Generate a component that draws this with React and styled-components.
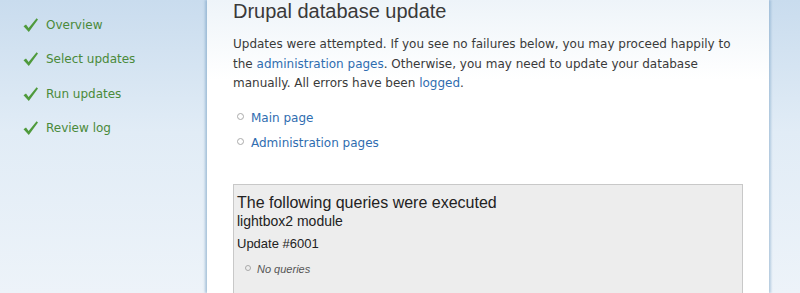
import React from "react";
import styled, { createGlobalStyle } from "styled-components";

const Global = createGlobalStyle`
  html, body { margin: 0; padding: 0; }
  body {
    width: 800px;
    height: 293px;
    overflow: hidden;
    background: linear-gradient(180deg, #c9dcee 0%, #e1ecf6 45%, #edf3f9 100%);
    font-family: "DejaVu Sans", Verdana, sans-serif;
  }
`;

const Page = styled.div`
  display: flex;
  height: 293px;
`;

const Sidebar = styled.ul`
  list-style: none;
  margin: 0;
  padding: 14px 0 0 22px;
  width: 185px;
  box-sizing: content-box;
  display: flex;
  flex-direction: column;
  gap: 13.5px;
`;

const Task = styled.li`
  display: flex;
  align-items: center;
  gap: 7px;
  height: 21px;
  font-size: 12px;
  color: #4a8a3a;
`;

const Panel = styled.main`
  width: 562px;
  height: 293px;
  display: flex;
  flex-direction: column;
  background: linear-gradient(180deg, #eef4f9 0px, #ffffff 80px);
  box-shadow: -2px 0 2px rgba(120, 160, 195, 0.55), 2px 0 2px rgba(120, 160, 195, 0.45);
  padding: 0 26px;
  box-sizing: border-box;
`;

const Title = styled.h1`
  margin: 0;
  font-family: "Liberation Sans", Arial, sans-serif;
  font-weight: normal;
  font-size: 20px;
  line-height: 22px;
  color: #3a3a3a;
`;

const Text = styled.p`
  margin: 13px 0 0;
  font-size: 12px;
  line-height: 19.5px;
  color: #3a3a3a;
`;

const Link = styled.a`
  color: #2f6db0;
  text-decoration: none;
`;

const Links = styled.ul`
  list-style: none;
  margin: 15px 0 0;
  padding: 0 0 0 4px;
  display: flex;
  flex-direction: column;
  gap: 6px;
`;

const Bullet = styled.span`
  width: ${p => p.$size}px;
  height: ${p => p.$size}px;
  border: 1px solid #aaa;
  border-radius: 50%;
  box-sizing: border-box;
  flex: none;
  margin-top: ${p => p.$offset}px;
`;

const LinkItem = styled.li`
  display: flex;
  align-items: flex-start;
  gap: 7px;
  font-size: 12px;
  line-height: 19px;
`;

const Box = styled.section`
  flex: 1;
  margin-top: 31px;
  border: 1px solid #c8c8c8;
  border-bottom: none;
  background: #ededed;
  padding: 9px 3px 0;
  box-sizing: border-box;
  font-family: "Liberation Sans", Arial, sans-serif;
  color: #222;
  overflow: hidden;
`;

const BoxTitle = styled.h2`
  margin: 0;
  font-weight: normal;
  font-size: 16px;
  line-height: 18px;
`;

const Module = styled.h3`
  margin: 0;
  font-weight: normal;
  font-size: 14px;
  line-height: 18px;
`;

const Update = styled.h4`
  margin: 5px 0 0;
  font-weight: normal;
  font-size: 13px;
  line-height: 18px;
`;

const Queries = styled.ul`
  list-style: none;
  margin: 9px 0 0;
  padding: 0 0 0 8px;
`;

const QueryItem = styled.li`
  display: flex;
  align-items: flex-start;
  gap: 6px;
  font-size: 11px;
  font-style: italic;
  line-height: 14px;
  color: #555;
`;

const Check = () => (
  <svg width="17" height="16" viewBox="0 0 17 16">
    <path d="M1.5 9.2 L4 7.4 L6.6 11 L14.6 1.2 L16 2.6 L6.8 15 Z" fill="#4f9a3c" />
  </svg>
);

const tasks = ["Overview", "Select updates", "Run updates", "Review log"];

export default function App() {
  return (
    <>
      <Global />
      <Page>
        <Sidebar>
          {tasks.map(t => (
            <Task key={t}>
              <Check />
              {t}
            </Task>
          ))}
        </Sidebar>
        <Panel>
          <Title>Drupal database update</Title>
          <Text>
            Updates were attempted. If you see no failures below, you may proceed happily to the{" "}
            <Link href="#">administration pages</Link>. Otherwise, you may need to update your database
            manually. All errors have been <Link href="#">logged</Link>.
          </Text>
          <Links>
            <LinkItem>
              <Bullet $size={7} $offset={4} />
              <Link href="#">Main page</Link>
            </LinkItem>
            <LinkItem>
              <Bullet $size={7} $offset={4} />
              <Link href="#">Administration pages</Link>
            </LinkItem>
          </Links>
          <Box>
            <BoxTitle>The following queries were executed</BoxTitle>
            <Module>lightbox2 module</Module>
            <Update>Update #6001</Update>
            <Queries>
              <QueryItem>
                <Bullet $size={6} $offset={3} />
                No queries
              </QueryItem>
            </Queries>
          </Box>
        </Panel>
      </Page>
    </>
  );
}
